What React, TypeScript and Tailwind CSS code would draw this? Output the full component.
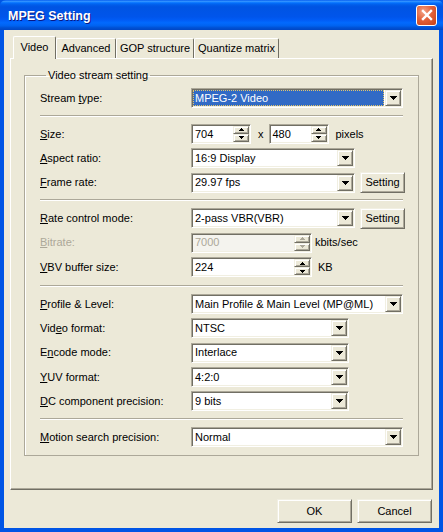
import React from "react";

const RAISED =
  "border border-t-[#f1efe2] border-l-[#f1efe2] border-r-[#716f64] border-b-[#716f64] shadow-[inset_1px_1px_0_#fff,inset_-1px_-1px_0_#aca899]";
const SUNKEN =
  "border border-t-[#aca899] border-l-[#aca899] border-r-white border-b-white p-[1px] shadow-[inset_1px_1px_0_#716f64,inset_-1px_-1px_0_#f1efe2]";

const DownArrow = () => (
  <svg width="7" height="4" viewBox="0 0 7 4" shapeRendering="crispEdges">
    <path d="M0 0h7v1h-1v1h-1v1h-1v1h-1v-1h-1v-1h-1v-1h-1z" fill="#000" />
  </svg>
);

const SmallArrow = ({ up, disabled }: { up?: boolean; disabled?: boolean }) => (
  <svg width="5" height="3" viewBox="0 0 5 3" shapeRendering="crispEdges">
    <path
      d={up ? "M2 0h1v1h1v1h1v1h-5v-1h1v-1h1z" : "M0 0h5v1h-1v1h-1v1h-1v-1h-1v-1h-1z"}
      fill={disabled ? "#aca899" : "#000"}
    />
  </svg>
);

interface ComboProps {
  w: string;
  value: string;
  selected?: boolean;
}

const Combo = ({ w, value, selected }: ComboProps) => (
  <div className={`${SUNKEN} bg-white flex h-[20px] shrink-0 ${w}`}>
    {selected ? (
      <div className="flex-1 flex items-center pl-[2px] mr-[1px] bg-[#316ac5] text-white outline-dotted outline-1 outline-[#e3c56a] -outline-offset-1">
        {value}
      </div>
    ) : (
      <div className="flex-1 flex items-center pl-[2px]">{value}</div>
    )}
    <div className={`w-[16px] h-full bg-[#ece9d8] flex items-center justify-center ${RAISED}`}>
      <DownArrow />
    </div>
  </div>
);

interface SpinProps {
  w: string;
  value: string;
  disabled?: boolean;
}

const Spin = ({ w, value, disabled }: SpinProps) => (
  <div
    className={`${SUNKEN} flex h-[20px] shrink-0 ${w} ${
      disabled ? "bg-[#f4f3ee] text-[#aca899]" : "bg-white"
    }`}
  >
    <div className="flex-1 flex items-center pl-[2px]">{value}</div>
    <div className="w-[16px] flex flex-col">
      <div className={`h-[8px] bg-[#ece9d8] flex items-center justify-center ${RAISED}`}>
        <SmallArrow up disabled={disabled} />
      </div>
      <div className={`h-[8px] bg-[#ece9d8] flex items-center justify-center ${RAISED}`}>
        <SmallArrow disabled={disabled} />
      </div>
    </div>
  </div>
);

const Button = ({ label, w, h }: { label: string; w: string; h: string }) => (
  <div className={`${RAISED} ${w} ${h} bg-[#ece9d8] flex items-center justify-center shrink-0`}>
    {label}
  </div>
);

interface LabelProps {
  pre?: string;
  u: string;
  post?: string;
  disabled?: boolean;
}

const Label = ({ pre, u, post, disabled }: LabelProps) => (
  <div className={`w-[151px] shrink-0 ${disabled ? "text-[#aca899]" : ""}`}>
    {pre}
    <span className="underline underline-offset-[1px]">{u}</span>
    {post}
  </div>
);

const Row = ({ children }: { children: React.ReactNode }) => (
  <div className="flex items-center h-[20px]">{children}</div>
);

const Separator = ({ wide }: { wide?: boolean }) => (
  <div
    className={`h-[2px] mr-[15px] border-t border-t-[#aca899] border-b border-b-white ${
      wide ? "my-[3px]" : "my-[2.5px]"
    }`}
  />
);

const tabs = [
  { name: "Advanced", w: "w-[60px]" },
  { name: "GOP structure", w: "w-[78px]" },
  { name: "Quantize matrix", w: "w-[85px]" },
];

export default function App() {
  return (
    <div className="w-[443px] h-[532px] bg-[#0055e5] flex flex-col text-[11px] text-black [font-family:'Liberation_Sans',Arial,sans-serif]">
      {/* Title bar */}
      <div className="h-[30px] shrink-0 flex items-center justify-between pl-[8px] pr-[6px] rounded-t-[6px] bg-[linear-gradient(to_bottom,#0058ee_0%,#3593ff_4%,#288eff_6%,#127dff_8%,#036ffc_10%,#0262ee_14%,#0057e5_20%,#0054e3_24%,#0055eb_56%,#005bf5_66%,#026afe_76%,#0062ef_86%,#0052d6_92%,#0046c4_100%)]">
        <span className="text-white font-bold text-[12.5px] pt-[2px] [text-shadow:1px_1px_0_#0a1883]">
          MPEG Setting
        </span>
        <div className="w-[21px] h-[21px] rounded-[3px] border border-white bg-[radial-gradient(circle_at_35%_30%,#f3a487_0%,#e2623b_45%,#c63f17_100%)] flex items-center justify-center">
          <svg width="12" height="12" viewBox="0 0 12 12">
            <path d="M2 2l8 8M10 2l-8 8" stroke="#fff" strokeWidth="2.4" strokeLinecap="square" />
          </svg>
        </div>
      </div>

      {/* Body */}
      <div className="flex-1 mx-[4px] mb-[4px] bg-[#ece9d8] flex flex-col pt-[6px]">
        {/* Tabs */}
        <div className="flex items-end h-[22px] pl-[9px]">
          <div className="relative z-10 w-[43px] h-[23px] -mb-[1px] bg-[#ece9d8] border-t border-l border-t-white border-l-white border-r border-r-[#716f64] rounded-t-[2px] flex items-center justify-center pb-[1px]">
            Video
          </div>
          {tabs.map((t) => (
            <div
              key={t.name}
              className={`${t.w} h-[20px] border-t border-l border-t-white border-l-white border-r border-r-[#716f64] rounded-t-[2px] flex items-center justify-center`}
            >
              {t.name}
            </div>
          ))}
        </div>

        {/* Tab panel */}
        <div className="h-[432px] mx-[6px] border border-t-white border-l-white border-r-[#716f64] border-b-[#716f64] shadow-[inset_-1px_-1px_0_#aca899] pt-[10px] pl-[13px] pr-[13px]">
          <fieldset className="border border-[#aca899] shadow-[inset_1px_1px_0_#fff] pl-[15px] pt-[6px] pb-[8px]">
            <legend className="ml-[6px] px-[2px] leading-[13px]">Video stream setting</legend>
            <div className="flex flex-col gap-[4.4px]">
              <Row>
                <Label pre="Stream " u="t" post="ype:" />
                <Combo w="w-[212px]" value="MPEG-2 Video" selected />
              </Row>
              <Separator />
              <Row>
                <Label u="S" post="ize:" />
                <Spin w="w-[60px]" value="704" />
                <span className="ml-[7px] mr-[5px]">x</span>
                <Spin w="w-[60px]" value="480" />
                <span className="ml-[7px]">pixels</span>
              </Row>
              <Row>
                <Label u="A" post="spect ratio:" />
                <Combo w="w-[164px]" value="16:9 Display" />
              </Row>
              <Row>
                <Label u="F" post="rame rate:" />
                <Combo w="w-[164px]" value="29.97 fps" />
                <div className="ml-[5px]">
                  <Button label="Setting" w="w-[45px]" h="h-[21px]" />
                </div>
              </Row>
              <Separator />
              <Row>
                <Label u="R" post="ate control mode:" />
                <Combo w="w-[164px]" value="2-pass VBR(VBR)" />
                <div className="ml-[5px]">
                  <Button label="Setting" w="w-[45px]" h="h-[21px]" />
                </div>
              </Row>
              <Row>
                <Label u="B" post="itrate:" disabled />
                <Spin w="w-[121px]" value="7000" disabled />
                <span className="ml-[3px]">kbits/sec</span>
              </Row>
              <Row>
                <Label u="V" post="BV buffer size:" />
                <Spin w="w-[121px]" value="224" />
                <span className="ml-[6px]">KB</span>
              </Row>
              <Separator wide />
              <Row>
                <Label u="P" post="rofile & Level:" />
                <Combo w="w-[212px]" value="Main Profile & Main Level (MP@ML)" />
              </Row>
              <Row>
                <Label pre="Vid" u="e" post="o format:" />
                <Combo w="w-[158px]" value="NTSC" />
              </Row>
              <Row>
                <Label pre="E" u="n" post="code mode:" />
                <Combo w="w-[158px]" value="Interlace" />
              </Row>
              <Row>
                <Label u="Y" post="UV format:" />
                <Combo w="w-[158px]" value="4:2:0" />
              </Row>
              <Row>
                <Label u="D" post="C component precision:" />
                <Combo w="w-[158px]" value="9 bits" />
              </Row>
              <Separator />
              <Row>
                <Label u="M" post="otion search precision:" />
                <Combo w="w-[212px]" value="Normal" />
              </Row>
            </div>
          </fieldset>
        </div>

        {/* Dialog buttons */}
        <div className="flex justify-end gap-[5px] pr-[7px] mt-[9px]">
          <Button label="OK" w="w-[75px]" h="h-[24px]" />
          <Button label="Cancel" w="w-[75px]" h="h-[24px]" />
        </div>
      </div>
    </div>
  );
}
